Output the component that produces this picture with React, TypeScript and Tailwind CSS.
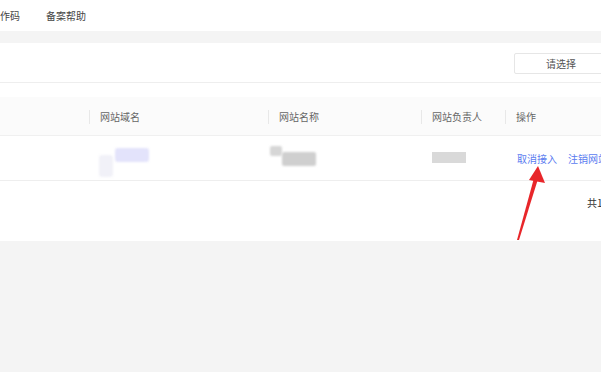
import React from "react";

const font = { fontFamily: '"Noto Sans CJK SC", "Liberation Sans", sans-serif' };

function Sep() {
  return <span className="absolute left-0 top-[13px] h-[14px] w-px bg-[#e8e8e8]" />;
}

export default function App() {
  return (
    <div className="relative w-[601px] h-[372px] overflow-hidden bg-[#f4f4f4] text-[10px] text-[#333]" style={font}>
      {/* tabs */}
      <div className="h-[31px] bg-white flex items-center gap-[26px] pl-0">
        <span className="text-[#444]">作码</span>
        <span className="text-[#444]">备案帮助</span>
      </div>
      <div className="h-[12px] bg-[#f4f4f4]" />
      {/* card */}
      <div className="bg-white h-[198px] flex flex-col">
        <div className="h-[40px] shrink-0 border-b border-[#eeeeee] flex items-start pt-[10px] pl-[514px]">
          <div className="w-[100px] shrink-0 h-[21px] border border-[#e6e6e6] rounded-[2px] flex items-center pl-[31px] text-[#555]">
            请选择
          </div>
        </div>
        <div className="h-[14px] shrink-0" />
        {/* header */}
        <div className="h-[39px] shrink-0 bg-[#fbfbfb] flex items-center text-[#666] border-b border-[#f0f0f0] whitespace-nowrap">
          <div className="w-[89px] shrink-0 h-full" />
          <div className="relative w-[179px] shrink-0 h-full flex items-center pl-[11px]"><Sep />网站域名</div>
          <div className="relative w-[153px] shrink-0 h-full flex items-center pl-[11px]"><Sep />网站名称</div>
          <div className="relative w-[84px] shrink-0 h-full flex items-center pl-[11px]"><Sep />网站负责人</div>
          <div className="relative flex-1 h-full flex items-center pl-[11px]"><Sep />操作</div>
        </div>
        {/* row */}
        <div className="h-[45px] shrink-0 border-b border-[#eeeeee] flex">
          <div className="w-[89px] shrink-0" />
          <div className="relative w-[179px] shrink-0">
            <div className="absolute left-[26px] top-[12px] w-[34px] h-[14px] bg-[#e3e3fb] rounded-[3px] blur-[1px]" />
            <div className="absolute left-[10px] top-[19px] w-[14px] h-[22px] bg-[#f1f1f8] rounded-[3px] blur-[1px]" />
          </div>
          <div className="relative w-[153px] shrink-0">
            <div className="absolute left-[2px] top-[10px] w-[12px] h-[10px] bg-[#d6d6d6] rounded-[2px] blur-[1px]" />
            <div className="absolute left-[14px] top-[16px] w-[34px] h-[14px] bg-[#cfcfcf] rounded-[2px] blur-[1px]" />
          </div>
          <div className="relative w-[84px] shrink-0">
            <div className="absolute left-[11px] top-[16px] w-[34px] h-[11px] bg-[#d9d9d9] blur-[0.5px]" />
          </div>
          <div className="flex-1 flex items-center pl-[12px] gap-[11px] text-[#5b7cf0] whitespace-nowrap">
            <span>取消接入</span>
            <span>注销网站</span>
          </div>
        </div>
        <div className="flex-1 relative">
          <span className="absolute left-[587px] top-[14px] whitespace-nowrap">共1条</span>
        </div>
      </div>
      {/* red arrow */}
      <svg className="absolute left-0 top-0" width="601" height="372" viewBox="0 0 601 372">
        <path d="M517 240 L534 178 L538 179 L519 240 Z" fill="#e8262a" />
        <path d="M538 166 L529 180 L545 183 Z" fill="#e8262a" />
      </svg>
    </div>
  );
}
